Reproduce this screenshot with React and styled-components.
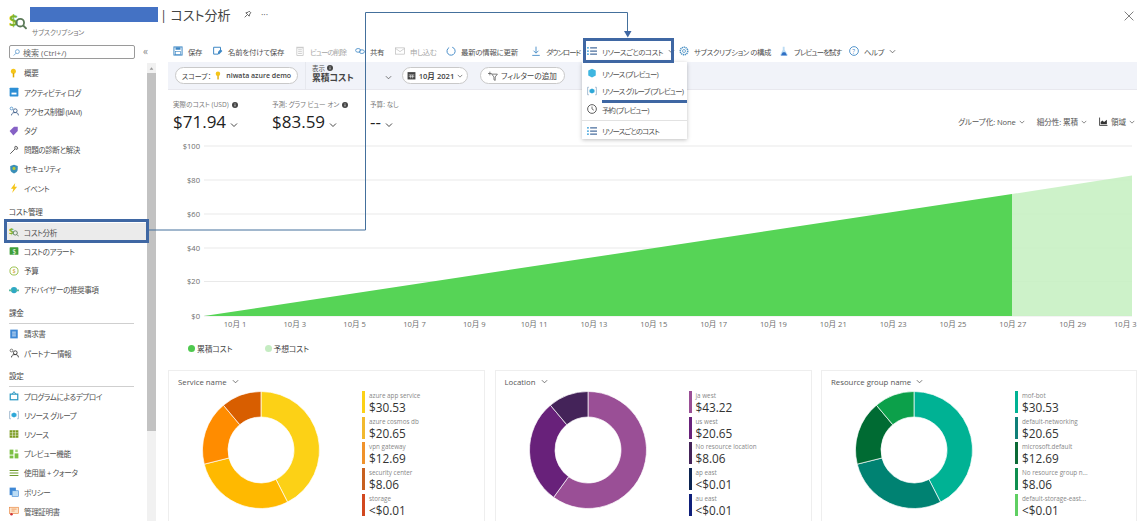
import React from "react";
import styled, { createGlobalStyle } from "styled-components";

const Global = createGlobalStyle`
  html, body { margin: 0; padding: 0; background: #fff; }
  body {
    font-family: "Open Sans", "Noto Sans CJK JP", sans-serif;
    font-feature-settings: "palt";
    color: #505050;
  }
`;

const Frame = styled.div`
  position: relative;
  width: 1137px;
  height: 521px;
  overflow: hidden;
  background: #fff;
`;
const Header = styled.header`
  height: 40px;
  display: flex;
  position: relative;
`;
const LogoBox = styled.div`
  width: 30px;
  padding: 12px 0 0 9px;
  box-sizing: border-box;
`;
const TitleWrap = styled.div`
  display: flex;
  flex-direction: column;
  flex: 1;
`;
const TitleRow = styled.div`
  display: flex;
  align-items: center;
  height: 23px;
  padding-top: 6px;
  box-sizing: border-box;
`;
const Redaction = styled.div`
  width: 128px;
  height: 15px;
  background: #4472c4;
`;
const Title = styled.h1`
  margin: 0 0 0 2px;
  font-size: 13px;
  font-weight: 400;
  color: #444;
  line-height: 20px;
  width: 83px;
  white-space: nowrap;
`;
const Subtitle = styled.div`
  font-size: 6.8px;
  letter-spacing: -0.2px;
  color: #777;
  margin: 4px 0 0 2px;
`;
const More = styled.span`
  font-size: 9px;
  color: #555;
  margin-left: 9px;
  line-height: 9px;
`;
const Close = styled.div`
  display: flex;
  margin: 11px 3px 0 0;
  width: 10px;
  height: 10px;
`;
const Body = styled.div`
  display: flex;
  height: 481px;
`;
const Sidebar = styled.aside`
  width: 168px;
  flex: none;
  display: flex;
  flex-direction: column;
`;
const SearchRow = styled.div`
  height: 23.4px;
  display: flex;
  align-items: flex-start;
  padding: 5px 0 0 9px;
  box-sizing: border-box;
`;
const SearchBox = styled.div`
  width: 126px;
  height: 14px;
  border: 1px solid #9a9a9a;
  border-radius: 2px;
  box-sizing: border-box;
  display: flex;
  align-items: center;
  gap: 3px;
  padding-left: 3px;
  font-size: 8px;
  color: #666;
`;
const Collapse = styled.span`
  font-size: 10px;
  color: #888;
  margin-left: 8px;
  line-height: 12px;
`;
const SideBody = styled.div`
  display: flex;
  flex: 1;
`;
const NavList = styled.nav`
  width: 147px;
  flex: none;
`;
const NavItem = styled.div`
  height: 19.2px;
  display: flex;
  align-items: center;
  gap: 5px;
  padding-left: ${(p) => (p.$active ? "3px" : "9px")};
  margin-left: ${(p) => (p.$active ? "6px" : "0")};
  font-size: 7.6px;
  letter-spacing: -0.45px;
  color: #505050;
  background: ${(p) => (p.$active ? "#ebebeb" : "transparent")};
  white-space: nowrap;
`;
const NavHeading = styled.div`
  margin: ${(p) => p.$top}px 13px 0 9px;
  height: 19.9px;
  line-height: 19px;
  font-size: 7.6px;
  letter-spacing: -0.3px;
  color: #444;
  box-sizing: border-box;
  border-bottom: 1px solid ${(p) => (p.$rule ? "#cfcfcf" : "transparent")};
`;
const ScrollTrack = styled.div`
  width: 9px;
  background: #f1f1f1;
  display: flex;
  flex-direction: column;
`;
const ScrollUp = styled.div`
  height: 10px;
  display: flex;
  justify-content: center;
  align-items: center;
`;
const ScrollThumb = styled.div`
  height: 358px;
  background: #c2c2c2;
`;
const Main = styled.main`
  flex: 1;
  min-width: 0;
  display: flex;
  flex-direction: column;
`;
const Toolbar = styled.div`
  height: 22px;
  display: flex;
  align-items: center;
  padding: 0 0 0 5px;
  white-space: nowrap;
`;
const ToolItem = styled.div`
  display: flex;
  align-items: center;
  gap: 5px;
  width: ${(p) => p.$w}px;
  flex: none;
  font-size: 7.4px;
  letter-spacing: ${(p) => p.$ls ?? -0.4}px;
  color: ${(p) => (p.$off ? "#a6a6a6" : "#505050")};
`;
const FilterBar = styled.div`
  height: 28px;
  background: #f1f3f9;
  border-bottom: 1px solid #e8e8ee;
  box-sizing: border-box;
  display: flex;
  align-items: center;
  padding-left: 7px;
`;
const Pill = styled.div`
  height: 17px;
  width: ${(p) => p.$w}px;
  margin-right: ${(p) => p.$mr}px;
  flex: none;
  border: 1px solid #c9c9c9;
  border-radius: 9px;
  background: #fff;
  box-sizing: border-box;
  display: flex;
  align-items: center;
  justify-content: center;
  gap: 3px;
  font-size: ${(p) => p.$fs}px;
  color: #444;
  white-space: nowrap;
`;
const PillStrong = styled.span`
  font-weight: 600;
`;
const ViewPicker = styled.div`
  width: 97px;
  height: 28px;
  flex: none;
  border-left: 1px solid #e6e8ee;
  box-sizing: border-box;
  padding: 3px 0 0 6px;
  display: flex;
  justify-content: space-between;
`;
const ViewText = styled.div`
  display: flex;
  flex-direction: column;
`;
const ViewLabel = styled.div`
  font-size: 6.5px;
  line-height: 7px;
  color: #555;
  display: flex;
  align-items: center;
  gap: 2px;
`;
const ViewName = styled.div`
  font-size: 8.8px;
  line-height: 13px;
  font-weight: 700;
  color: #444;
`;
const ViewChevron = styled.div`
  display: flex;
  padding: 9px 10px 0 0;
`;
const KpiRow = styled.div`
  height: 46px;
  display: flex;
  align-items: flex-start;
  padding: 11px 0 0 5px;
  box-sizing: border-box;
`;
const Kpi = styled.div`
  width: ${(p) => p.$w}px;
  flex: none;
`;
const KpiLabel = styled.div`
  font-size: 6.6px;
  line-height: 8px;
  color: #777;
  display: flex;
  align-items: center;
  gap: 3px;
  white-space: nowrap;
`;
const KpiValue = styled.div`
  font-size: 17px;
  font-weight: 500;
  line-height: 24px;
  color: #222;
  margin-top: 1px;
  display: flex;
  align-items: center;
  gap: 4px;
`;
const KpiChevron = styled.span`
  display: inline-flex;
  margin-top: 6px;
`;
const ChartControls = styled.div`
  margin-left: auto;
  display: flex;
  align-items: center;
  gap: 12px;
  padding: 15px 2px 0 0;
  font-size: 7.6px;
  letter-spacing: -0.1px;
  color: #555;
  white-space: nowrap;
`;
const Control = styled.div`
  display: flex;
  align-items: center;
  gap: 3px;
`;
const ChartSvg = styled.svg`
  display: block;
  width: 969px;
  height: 200px;
  flex: none;
`;
const AxisText = styled.text`
  font-size: 7.6px;
  fill: #6e6e6e;
`;
const Legend = styled.div`
  height: 24px;
  margin-bottom: 10px;
  flex: none;
  display: flex;
  align-items: center;
  padding-left: 20px;
  gap: 32px;
`;
const LegendItem = styled.div`
  display: flex;
  align-items: center;
  gap: 2px;
  font-size: 7.8px;
  letter-spacing: -0.1px;
  color: #444;
`;
const Dot = styled.span`
  width: 7px;
  height: 7px;
  border-radius: 50%;
  background: ${(p) => p.$c};
`;
const Cards = styled.div`
  display: grid;
  grid-template-columns: 317px 317px 316px;
  column-gap: 9.5px;
  flex: 1;
`;
const Card = styled.section`
  border: 1px solid #eeeeee;
  border-bottom: none;
  box-sizing: border-box;
  padding: 5px 0 0 9px;
`;
const CardTitle = styled.div`
  display: flex;
  align-items: center;
  gap: 5px;
  height: 11px;
  font-size: 7.8px;
  color: #555;
`;
const CardBody = styled.div`
  display: flex;
  margin-top: 4px;
`;
const Donut = styled.svg`
  width: 118px;
  height: 118px;
  flex: none;
  margin-left: 24px;
`;
const LegendList = styled.div`
  margin-left: 42px;
  display: flex;
  flex-direction: column;
  gap: 3.7px;
`;
const Entry = styled.div`
  display: flex;
  height: 22px;
  gap: 4px;
`;
const EntryBar = styled.span`
  width: 3px;
  height: 22px;
  flex: none;
  background: ${(p) => p.$c};
`;
const EntryText = styled.div`
  padding-top: 1px;
`;
const EntryLabel = styled.div`
  font-size: 6.3px;
  line-height: 8px;
  color: #888;
  white-space: nowrap;
`;
const EntryValue = styled.div`
  font-size: 11.8px;
  line-height: 15px;
  color: #333;
`;
const Menu = styled.div`
  position: absolute;
  left: 582px;
  top: 62px;
  width: 105px;
  height: 77px;
  background: #fff;
  box-shadow: 0 1px 4px rgba(0, 0, 0, 0.25);
  display: flex;
  flex-direction: column;
  padding-top: 1px;
  box-sizing: border-box;
`;
const MenuItem = styled.div`
  height: ${(p) => p.$h}px;
  flex: none;
  display: flex;
  align-items: center;
  gap: 5px;
  padding-left: 5px;
  font-size: 7.4px;
  letter-spacing: -0.8px;
  color: #505050;
  white-space: nowrap;
  border-top: ${(p) => (p.$rule ? "1px solid #e2e2e2" : "none")};
`;
const Highlight = styled.div`
  position: absolute;
  left: ${(p) => p.$x}px;
  top: ${(p) => p.$y}px;
  width: ${(p) => p.$w}px;
  height: ${(p) => p.$h}px;
  border: 3px solid #3f67a3;
  box-sizing: border-box;
  pointer-events: none;
`;
const Underline = styled.div`
  position: absolute;
  left: 602px;
  top: 100px;
  width: 85px;
  height: 3px;
  background: #3f67a3;
`;
const Connector = styled.svg`
  position: absolute;
  left: 0;
  top: 0;
  width: 1137px;
  height: 521px;
  pointer-events: none;
`;

const S = ({ s = 10, children, vb = "0 0 16 16" }) => (
  <svg width={s} height={s} viewBox={vb} style={{ flex: "none" }}>
    {children}
  </svg>
);
const Chevron = ({ s = 7, c = "#555" }) => (
  <S s={s}>
    <path d="M2 5l6 6 6-6" fill="none" stroke={c} strokeWidth="1.8" />
  </S>
);
const Info = () => (
  <S s={6}>
    <circle cx="8" cy="8" r="8" fill="#444" />
    <rect x="7" y="7" width="2" height="5" fill="#fff" />
    <rect x="7" y="4" width="2" height="2" fill="#fff" />
  </S>
);
const CostLogo = ({ s = 16, w = 1.6 }) => (
  <S s={s}>
    <text x="0" y="12" fontSize="14" fontWeight="700" fill="#7fb52c" fontFamily="Open Sans">$</text>
    <circle cx="10" cy="9.5" r="3.4" fill="none" stroke="#5c7a58" strokeWidth={w} />
    <path d="M12.6 12l3 3" stroke="#5c7a58" strokeWidth={w} />
  </S>
);

const icons = {
  key: (
    <>
      <circle cx="7" cy="5" r="4" fill="#f5c518" />
      <rect x="6" y="8" width="2.4" height="7" fill="#e0a800" />
    </>
  ),
  log: (
    <>
      <rect x="1" y="1" width="14" height="14" rx="1" fill="#2d8fd5" />
      <rect x="4" y="9" width="8" height="3" fill="#fff" />
    </>
  ),
  iam: (
    <>
      <circle cx="4" cy="4" r="2.2" fill="none" stroke="#3f88c5" strokeWidth="1.2" />
      <circle cx="10" cy="7.5" r="3" fill="none" stroke="#3f5f8a" strokeWidth="1.4" />
      <path d="M4 15c0-4 3-4.5 6-4.5s5 1 5 4.5" fill="none" stroke="#3f5f8a" strokeWidth="1.4" />
    </>
  ),
  tag: <path d="M1 8l7-7h6v7l-7 7z" fill="#8661c5" />,
  wrench: (
    <path d="M2 14l8-8M10 2a4 4 0 0 1 4 4l-3 1-2-2z" fill="none" stroke="#555" strokeWidth="1.5" />
  ),
  shield: (
    <>
      <path d="M8 1l6 2v5c0 4-3 6-6 7-3-1-6-3-6-7V3z" fill="#3a8fb7" />
      <circle cx="8" cy="7" r="2.5" fill="#b7c83a" />
    </>
  ),
  bolt: <path d="M10 0L3 9h4l-2 7 8-10H9z" fill="#f5c518" />,
  alert: (
    <>
      <rect x="1" y="2" width="14" height="12" rx="1" fill="#3f9f3a" />
      <text x="5.5" y="12" fontSize="10" fill="#fff">$</text>
    </>
  ),
  budget: (
    <>
      <circle cx="8" cy="8" r="6.5" fill="none" stroke="#8fb93a" strokeWidth="1.4" />
      <text x="5.5" y="11.5" fontSize="9" fill="#c99a1f">$</text>
    </>
  ),
  advisor: (
    <>
      <circle cx="8" cy="8" r="5" fill="#2ea8c4" />
      <path d="M0 7h5v3H0zM11 7h5v3h-5z" fill="#57b8a0" />
    </>
  ),
  invoice: (
    <>
      <rect x="2" y="1" width="12" height="14" fill="#3f88d5" />
      <path d="M5 5h6M5 8h6M5 11h6" stroke="#fff" strokeWidth="1.2" />
    </>
  ),
  partner: (
    <>
      <circle cx="4" cy="4" r="2.2" fill="none" stroke="#555" strokeWidth="1.2" />
      <circle cx="10" cy="7.5" r="3" fill="none" stroke="#333" strokeWidth="1.4" />
      <path d="M4 15c0-4 3-4.5 6-4.5s5 1 5 4.5" fill="none" stroke="#333" strokeWidth="1.4" />
    </>
  ),
  deploy: (
    <>
      <rect x="2" y="5" width="12" height="9" fill="none" stroke="#2e9ac4" strokeWidth="2" />
      <path d="M5 5l3-4 3 4" fill="none" stroke="#2e9ac4" strokeWidth="1.5" />
    </>
  ),
  rg: (
    <>
      <path d="M3 2H1v12h2M13 2h2v12h-2" fill="none" stroke="#8aa8c4" strokeWidth="1.2" />
      <path d="M8 4l4 2v4l-4 2-4-2V6z" fill="#2ea8d8" />
    </>
  ),
  grid: (
    <>
      <rect x="1" y="2" width="14" height="12" fill="#7a9a1e" />
      <path d="M1 6h14M1 10h14M5.7 2v12M10.3 2v12" stroke="#fff" strokeWidth="0.8" />
    </>
  ),
  preview: (
    <>
      <rect x="1" y="1" width="6" height="8" fill="#7cc043" />
      <rect x="1" y="10.5" width="6" height="4.5" fill="#7cc043" />
      <rect x="9" y="7" width="6" height="8" fill="#7cc043" />
      <rect x="10" y="1" width="4" height="4" fill="#a4d37c" />
    </>
  ),
  usage: <path d="M1 4h14M1 8h14M1 12h14" stroke="#6f9a2e" strokeWidth="1.8" />,
  policy: (
    <>
      <rect x="1" y="1" width="10" height="12" fill="#3f88d5" />
      <rect x="5" y="6" width="10" height="9" fill="#bcdcf4" stroke="#3f88d5" />
    </>
  ),
  cert: (
    <>
      <rect x="1" y="2" width="14" height="10" fill="#fde3c8" stroke="#e8823a" />
      <path d="M4 5h8M4 8h5" stroke="#e8823a" />
      <circle cx="4" cy="13" r="2" fill="#d13438" />
    </>
  ),
  save: (
    <>
      <rect x="1.5" y="1.5" width="13" height="13" fill="none" stroke="#3f88c5" strokeWidth="1.6" />
      <rect x="4" y="2" width="8" height="4" fill="#3f88c5" />
      <rect x="4" y="9" width="8" height="5" fill="none" stroke="#3f88c5" />
    </>
  ),
  saveas: (
    <>
      <path d="M1 2h11v5l-4 6H1z" fill="none" stroke="#3f88c5" strokeWidth="1.6" />
      <path d="M8 9l4-4 3 3-5 5H8z" fill="#3f88c5" />
    </>
  ),
  trash: (
    <>
      <rect x="3" y="3" width="10" height="12" fill="none" stroke="#b5b5b5" />
      <path d="M5 6h6M5 9h6M5 12h6M2 2h12" stroke="#b5b5b5" />
    </>
  ),
  share: (
    <>
      <ellipse cx="5" cy="7" rx="4" ry="3" fill="none" stroke="#3f88c5" strokeWidth="1.3" />
      <ellipse cx="11" cy="9" rx="4" ry="3" fill="none" stroke="#3f88c5" strokeWidth="1.3" />
    </>
  ),
  mail: (
    <>
      <rect x="1" y="3" width="14" height="10" fill="none" stroke="#b5b5b5" />
      <path d="M1 4l7 5 7-5" fill="none" stroke="#b5b5b5" />
    </>
  ),
  refresh: (
    <path d="M5 2.5A6.5 6.5 0 1 0 10 2" fill="none" stroke="#3f88c5" strokeWidth="1.5" />
  ),
  download: <path d="M8 1v10M4 7.5l4 4 4-4M2 15h12" fill="none" stroke="#3f88c5" strokeWidth="1.4" />,
  list: (
    <>
      <path d="M5 3h11M5 8h11M5 13h11" stroke="#4a6f9e" strokeWidth="2" />
      <path d="M0 3h3M0 8h3M0 13h3" stroke="#2e9ad8" strokeWidth="2" />
    </>
  ),
  gear: (
    <>
      <circle cx="8" cy="8" r="6" fill="none" stroke="#4a90c4" strokeWidth="2.4" strokeDasharray="2 1" />
      <circle cx="8" cy="8" r="2.4" fill="none" stroke="#4a90c4" strokeWidth="1.2" />
    </>
  ),
  flask: (
    <>
      <path d="M6 1h3v5l5 8v1H2v-1l4-8z" fill="#bcdcf4" />
      <path d="M3 15l3-5h4l3 5z" fill="#2e6fc4" />
    </>
  ),
  help: (
    <>
      <circle cx="8" cy="8" r="7" fill="none" stroke="#3f88c5" strokeWidth="1.4" />
      <text x="5" y="12" fontSize="10" fill="#3f88c5">?</text>
    </>
  ),
  cube: <path d="M8 1l6 3v8l-6 3-6-3V4z" fill="#3fb6e0" />,
  clock: (
    <>
      <circle cx="8" cy="8" r="7" fill="none" stroke="#555" strokeWidth="1.5" />
      <path d="M8 4v4l3 2" fill="none" stroke="#555" strokeWidth="1.3" />
    </>
  ),
  search: (
    <>
      <circle cx="10" cy="6" r="4.5" fill="none" stroke="#3f88c5" strokeWidth="1.5" />
      <path d="M7 9.5L1.5 15" stroke="#3f88c5" strokeWidth="1.5" />
    </>
  ),
  pin: (
    <path d="M3 13l4-4M5 5l6 6 1-4 2-2-3-3-2 2z" fill="none" stroke="#444" strokeWidth="1.4" />
  ),
  calendar: (
    <>
      <rect x="1" y="2" width="14" height="13" fill="#444" />
      <path d="M3 7h10M3 10h10M6.5 7v6M10 7v6" stroke="#fff" strokeWidth="1" />
    </>
  ),
  filter: (
    <>
      <path d="M6 5h9l-3.5 4.5V15l-2-1V9.5z" fill="none" stroke="#555" strokeWidth="1.2" />
      <path d="M3 1v6M0 4h6" stroke="#555" strokeWidth="1.2" />
    </>
  ),
  area: (
    <>
      <path d="M1 1v14h14" fill="none" stroke="#333" strokeWidth="1.5" />
      <path d="M3 13V9l3-3 3 3 5-4v8z" fill="#333" />
    </>
  ),
  close: <path d="M1 1l14 14M15 1L1 15" stroke="#555" strokeWidth="1.2" />,
};
const I = ({ n, s = 10 }) =>
  n === "cost" ? <CostLogo s={s} w={1.4} /> : <S s={s}>{icons[n]}</S>;

const groups = [
  {
    items: [
      ["key", "概要"],
      ["log", "アクティビティ ログ"],
      ["iam", "アクセス制御 (IAM)"],
      ["tag", "タグ"],
      ["wrench", "問題の診断と解決"],
      ["shield", "セキュリティ"],
      ["bolt", "イベント"],
    ],
  },
  {
    title: "コスト管理",
    top: 5,
    items: [
      ["cost", "コスト分析", true],
      ["alert", "コストのアラート"],
      ["budget", "予算"],
      ["advisor", "アドバイザーの推奨事項"],
    ],
  },
  {
    title: "課金",
    top: 5,
    rule: true,
    items: [
      ["invoice", "請求書"],
      ["partner", "パートナー情報"],
    ],
  },
  {
    title: "設定",
    top: 4,
    rule: true,
    items: [
      ["deploy", "プログラムによるデプロイ"],
      ["rg", "リソース グループ"],
      ["grid", "リソース"],
      ["preview", "プレビュー機能"],
      ["usage", "使用量 + クォータ"],
      ["policy", "ポリシー"],
      ["cert", "管理証明書"],
    ],
  },
];

const tools = [
  ["save", "保存", 40],
  ["saveas", "名前を付けて保存", 82, false, -0.2],
  ["trash", "ビューの削除", 60, true, -1],
  ["share", "共有", 40],
  ["mail", "申し込む", 51, true],
  ["refresh", "最新の情報に更新", 85, false, -0.2],
  ["download", "ダウンロード", 56, false, -1],
];
const tools2 = [
  ["gear", "サブスクリプション の構成", 100],
  ["flask", "プレビューを試す", 70, -0.9],
];

const polar = (r, deg) => {
  const a = ((deg - 90) * Math.PI) / 180;
  return [59 + r * Math.cos(a), 59 + r * Math.sin(a)];
};
const arc = (from, to) => {
  const [R, r] = [58.5, 33];
  const large = to - from > 180 ? 1 : 0;
  const p1 = polar(R, from);
  const p2 = polar(R, to);
  const p3 = polar(r, to);
  const p4 = polar(r, from);
  return `M${p1[0]} ${p1[1]}A${R} ${R} 0 ${large} 1 ${p2[0]} ${p2[1]}L${p3[0]} ${p3[1]}A${r} ${r} 0 ${large} 0 ${p4[0]} ${p4[1]}Z`;
};

const cards = [
  {
    title: "Service name",
    segs: [
      [0, 153, "#fcd116"],
      [153, 256, "#ffb900"],
      [256, 320, "#ff8c00"],
      [320, 360, "#d85e00"],
    ],
    rows: [
      ["azure app service", "$30.53", "#fcd116"],
      ["azure cosmos db", "$20.65", "#f2b92e"],
      ["vpn gateway", "$12.69", "#f0922b"],
      ["security center", "$8.06", "#c8601f"],
      ["storage", "<$0.01", "#d2481f"],
    ],
  },
  {
    title: "Location",
    segs: [
      [0, 216, "#9a4f96"],
      [216, 320, "#68217a"],
      [320, 360, "#442359"],
    ],
    rows: [
      ["ja west", "$43.22", "#9a4f96"],
      ["us west", "$20.65", "#68217a"],
      ["No resource location", "$8.06", "#442359"],
      ["ap east", "<$0.01", "#0b2350"],
      ["au east", "<$0.01", "#0f1f7a"],
    ],
  },
  {
    title: "Resource group name",
    segs: [
      [0, 153, "#00b294"],
      [153, 256, "#008272"],
      [256, 320, "#006b33"],
      [320, 360, "#0ca04a"],
    ],
    rows: [
      ["mof-bot", "$30.53", "#00b294"],
      ["default-networking", "$20.65", "#0f7f78"],
      ["microsoft.default", "$12.69", "#0b6a36"],
      ["No resource group n...", "$8.06", "#0f8f4f"],
      ["default-storage-east...", "<$0.01", "#5fcf62"],
    ],
  },
];

const X0 = 36;
const axisY = [
  ["$100", 10],
  ["$80", 44],
  ["$60", 78],
  ["$40", 112],
  ["$20", 145.5],
  ["$0", 180],
];
const dayLabels = Array.from({ length: 16 }, (_, i) => ({
  t: `10月 ${i * 2 + 1}`,
  x: i === 15 ? 959.5 : 67 + i * 59.83,
}));

export default function App() {
  return (
    <Frame>
      <Global />
      <Header>
        <LogoBox>
          <CostLogo s={18} />
        </LogoBox>
        <TitleWrap>
          <TitleRow>
            <Redaction />
            <Title>| コスト分析</Title>
            <I n="pin" s={9} />
            <More>···</More>
          </TitleRow>
          <Subtitle>サブスクリプション</Subtitle>
        </TitleWrap>
        <Close>
          <I n="close" s={10} />
        </Close>
      </Header>
      <Body>
        <Sidebar>
          <SearchRow>
            <SearchBox>
              <I n="search" s={7} />
              検索 (Ctrl+/)
            </SearchBox>
            <Collapse>«</Collapse>
          </SearchRow>
          <SideBody>
            <NavList>
              {groups.map((g, i) => (
                <div key={i}>
                  {g.title && (
                    <NavHeading $top={g.top} $rule={g.rule}>
                      {g.title}
                    </NavHeading>
                  )}
                  {g.items.map(([ic, label, active]) => (
                    <NavItem key={label} $active={active}>
                      <I n={ic} />
                      {label}
                    </NavItem>
                  ))}
                </div>
              ))}
            </NavList>
            <ScrollTrack>
              <ScrollUp>
                <S s={5}>
                  <path d="M8 4l6 8H2z" fill="#999" />
                </S>
              </ScrollUp>
              <ScrollThumb />
            </ScrollTrack>
          </SideBody>
        </Sidebar>
        <Main>
          <Toolbar>
            {tools.map(([ic, t, w, off, ls]) => (
              <ToolItem key={t} $w={w} $off={off} $ls={ls}>
                <I n={ic} />
                {t}
              </ToolItem>
            ))}
            <ToolItem $w={92}>
              <I n="list" />
              リソースごとのコスト
              <Chevron />
            </ToolItem>
            {tools2.map(([ic, t, w, ls]) => (
              <ToolItem key={t} $w={w} $ls={ls}>
                <I n={ic} />
                {t}
              </ToolItem>
            ))}
            <ToolItem $w={50}>
              <I n="help" />
              ヘルプ
              <Chevron />
            </ToolItem>
          </Toolbar>
          <FilterBar>
            <Pill $w={123} $mr={7} $fs={7}>
              スコープ：
              <I n="key" s={9} />
              <PillStrong>niwata azure demo</PillStrong>
            </Pill>
            <ViewPicker>
              <ViewText>
                <ViewLabel>
                  表示 <Info />
                </ViewLabel>
                <ViewName>累積コスト</ViewName>
              </ViewText>
              <ViewChevron>
                <Chevron />
              </ViewChevron>
            </ViewPicker>
            <Pill $w={66} $mr={12} $fs={7.6}>
              <I n="calendar" s={9} />
              <PillStrong>10月 2021</PillStrong>
              <Chevron s={6} />
            </Pill>
            <Pill $w={85} $mr={0} $fs={7.6}>
              <I n="filter" s={10} />
              フィルターの追加
            </Pill>
          </FilterBar>
          <KpiRow>
            <Kpi $w={99}>
              <KpiLabel>
                実際のコスト (USD) <Info />
              </KpiLabel>
              <KpiValue>
                $71.94
                <KpiChevron>
                  <Chevron s={8} c="#333" />
                </KpiChevron>
              </KpiValue>
            </Kpi>
            <Kpi $w={98}>
              <KpiLabel>
                予測: グラフ ビュー オン <Info />
              </KpiLabel>
              <KpiValue>
                $83.59
                <KpiChevron>
                  <Chevron s={8} c="#333" />
                </KpiChevron>
              </KpiValue>
            </Kpi>
            <Kpi $w={90}>
              <KpiLabel>予算: なし</KpiLabel>
              <KpiValue>
                --
                <KpiChevron>
                  <Chevron s={8} c="#333" />
                </KpiChevron>
              </KpiValue>
            </Kpi>
            <ChartControls>
              <Control>
                グループ化: None <Chevron s={6} />
              </Control>
              <Control>
                細分性: 累積 <Chevron s={6} />
              </Control>
              <Control>
                <I n="area" s={9} /> 領域 <Chevron s={6} />
              </Control>
            </ChartControls>
          </KpiRow>
          <ChartSvg viewBox="0 0 969 200">
            {axisY.map(([t, y]) => (
              <g key={t}>
                <line x1={X0} x2="964" y1={y} y2={y} stroke="#e9e9e9" />
                <AxisText x="32" y={y + 2.6} textAnchor="end">
                  {t}
                </AxisText>
              </g>
            ))}
            <polygon points="844,180 844,58 964,39.5 964,180" fill="#c6f0c2" fillOpacity="0.88" />
            <polygon points={`${X0},180 844,58 844,180`} fill="#56d456" />
            {dayLabels.map((d) => (
              <AxisText key={d.t} x={d.x} y="191" textAnchor="middle">
                {d.t}
              </AxisText>
            ))}
          </ChartSvg>
          <Legend>
            <LegendItem>
              <Dot $c="#4fc94f" />
              累積コスト
            </LegendItem>
            <LegendItem>
              <Dot $c="#c5ecc2" />
              予想コスト
            </LegendItem>
          </Legend>
          <Cards>
            {cards.map((c) => (
              <Card key={c.title}>
                <CardTitle>
                  {c.title}
                  <Chevron s={7} />
                </CardTitle>
                <CardBody>
                  <Donut viewBox="0 0 118 118">
                    {c.segs.map(([a, b, col]) => (
                      <path key={a} d={arc(a, b)} fill={col} stroke="#fff" strokeWidth="0.7" />
                    ))}
                  </Donut>
                  <LegendList>
                    {c.rows.map(([label, val, col]) => (
                      <Entry key={label}>
                        <EntryBar $c={col} />
                        <EntryText>
                          <EntryLabel>{label}</EntryLabel>
                          <EntryValue>{val}</EntryValue>
                        </EntryText>
                      </Entry>
                    ))}
                  </LegendList>
                </CardBody>
              </Card>
            ))}
          </Cards>
        </Main>
      </Body>

      <Menu>
        <MenuItem $h={20}>
          <I n="cube" />
          リソース (プレビュー)
        </MenuItem>
        <MenuItem $h={15}>
          <I n="rg" />
          リソース グループ (プレビュー)
        </MenuItem>
        <MenuItem $h={22}>
          <I n="clock" />
          予約 (プレビュー)
        </MenuItem>
        <MenuItem $h={19} $rule>
          <I n="list" />
          リソースごとのコスト
        </MenuItem>
      </Menu>
      <Underline />
      <Highlight $x={4} $y={219} $w={145} $h={24} />
      <Highlight $x={583} $y={38} $w={91} $h={25} />
      <Connector viewBox="0 0 1137 521">
        <path d="M149 230H365.5V12.5H627.5V32" fill="none" stroke="#44709c" strokeWidth="1" />
        <path d="M624 31h7.5l-3.7 6.5z" fill="#3f67a3" />
      </Connector>
    </Frame>
  );
}
